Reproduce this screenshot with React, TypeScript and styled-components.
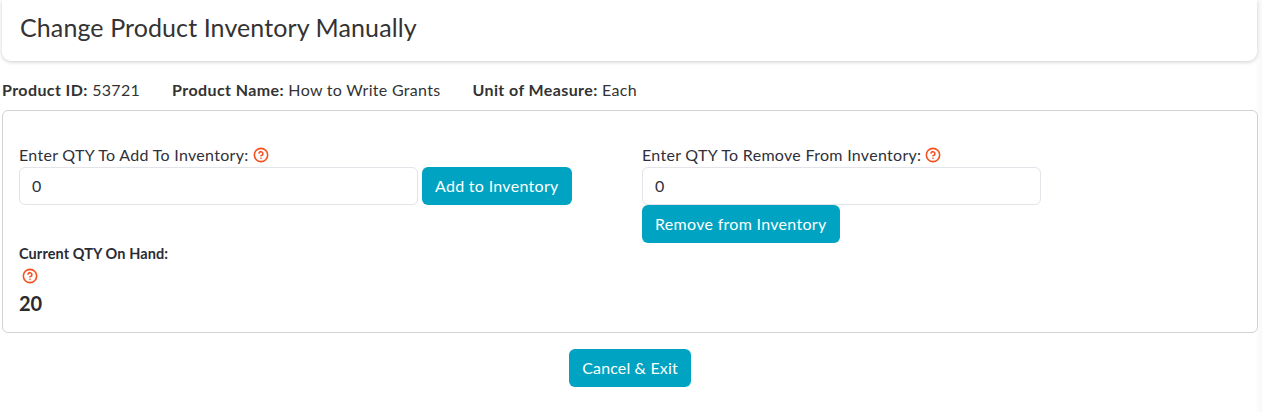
import React from 'react';
import styled, { createGlobalStyle } from 'styled-components';
import { CircleHelp } from 'lucide-react';

const GlobalStyle = createGlobalStyle`
  html, body {
    margin: 0;
    padding: 0;
    background: #fff;
  }
  body {
    font-family: "Lato", "Noto Sans", sans-serif;
    color: #2b2b33;
  }
`;

const Page = styled.div`
  width: 1262px;
  height: 412px;
  overflow: hidden;
  box-sizing: border-box;
  padding: 0 4px 0 2px;
  background: linear-gradient(to right, #fff 1255px, #f8f8f8 1262px);
`;

const HeaderCard = styled.div`
  height: 61px;
  box-sizing: border-box;
  margin-right: 1px;
  padding: 13px 18px 0;
  background: #fff;
  border-radius: 0 0 9px 9px;
  box-shadow: 0 1px 4px rgba(0, 0, 0, 0.2);
`;

const Title = styled.h1`
  margin: 0;
  font-size: 25px;
  line-height: 29px;
  font-weight: 400;
  letter-spacing: 0.1px;
  color: #333;
`;

const MetaRow = styled.div`
  display: flex;
  gap: 32px;
  box-sizing: border-box;
  height: 49px;
  padding-top: 8px;
  align-items: center;
  font-size: 16px;
  letter-spacing: 0.3px;
  color: #333;
`;

const MetaItem = styled.span`
  white-space: nowrap;

  strong {
    font-weight: 700;
    letter-spacing: 0.4px;
  }
`;

const Panel = styled.div`
  box-sizing: border-box;
  height: 223px;
  padding: 32px 16px 0;
  background: #fff;
  border: 1px solid #d2d2d2;
  border-radius: 6px;
`;

const Columns = styled.div`
  display: grid;
  grid-template-columns: 623px 1fr;
`;

const Field = styled.div<{ $width: number }>`
  display: flex;
  flex-wrap: wrap;
  align-content: flex-start;
  width: ${(p) => p.$width}px;
`;

const FieldLabel = styled.label`
  display: flex;
  align-items: center;
  gap: 4px;
  box-sizing: border-box;
  width: 100%;
  height: 24px;
  padding-bottom: 1px;
  font-size: 16px;
  letter-spacing: 0.3px;
  color: #30303a;
`;

const QtyInput = styled.input`
  box-sizing: border-box;
  width: 399px;
  height: 38px;
  padding: 0 12px 2px;
  border: 1px solid #e2e4ea;
  border-radius: 6px;
  font: inherit;
  font-size: 16px;
  color: #30303a;
  background: #fff;
`;

const ActionButton = styled.button<{ $left?: number }>`
  height: 38px;
  margin-left: ${(p) => p.$left ?? 0}px;
  padding: 0 13px 2px;
  border: none;
  border-radius: 6px;
  background: #00a3c1;
  color: #fff;
  font: inherit;
  font-size: 16px;
  letter-spacing: 0.3px;
  white-space: nowrap;
`;

const CancelButton = styled(ActionButton)`
  letter-spacing: 0.15px;
`;

const OnHand = styled.div`
  margin-top: 2px;
`;

const OnHandLabel = styled.div`
  font-size: 14.5px;
  line-height: 18px;
  font-weight: 700;
  letter-spacing: 0.1px;
  color: #2b2b33;
`;

const HelpRow = styled.div`
  display: flex;
  height: 26px;
  align-items: center;
  padding-left: 3px;
`;

const OnHandValue = styled.div`
  font-size: 20px;
  line-height: 28px;
  font-weight: 700;
  color: #2b2b2b;
`;

const Footer = styled.div`
  display: flex;
  justify-content: center;
  padding-top: 16px;
`;

const Help = () => <CircleHelp size={16} color="#f4511e" strokeWidth={2.4} />;

export default function App() {
  return (
    <Page>
      <GlobalStyle />
      <HeaderCard>
        <Title>Change Product Inventory Manually</Title>
      </HeaderCard>
      <MetaRow>
        <MetaItem><strong>Product ID:</strong> 53721</MetaItem>
        <MetaItem><strong>Product Name:</strong> How to Write Grants</MetaItem>
        <MetaItem><strong>Unit of Measure:</strong> Each</MetaItem>
      </MetaRow>
      <Panel>
        <Columns>
          <Field $width={600}>
            <FieldLabel>Enter QTY To Add To Inventory: <Help /></FieldLabel>
            <QtyInput defaultValue="0" />
            <ActionButton $left={4}>Add to Inventory</ActionButton>
          </Field>
          <Field $width={500}>
            <FieldLabel>Enter QTY To Remove From Inventory: <Help /></FieldLabel>
            <QtyInput defaultValue="0" />
            <ActionButton>Remove from Inventory</ActionButton>
          </Field>
        </Columns>
        <OnHand>
          <OnHandLabel>Current QTY On Hand:</OnHandLabel>
          <HelpRow><Help /></HelpRow>
          <OnHandValue>20</OnHandValue>
        </OnHand>
      </Panel>
      <Footer>
        <CancelButton>Cancel &amp; Exit</CancelButton>
      </Footer>
    </Page>
  );
}
